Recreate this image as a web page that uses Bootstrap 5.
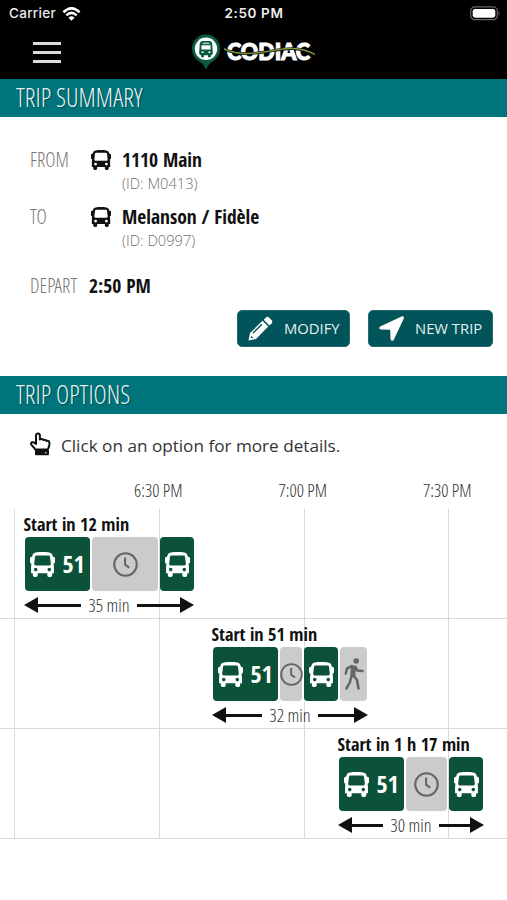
<!DOCTYPE html>
<html lang="en">
<head>
<meta charset="utf-8">
<meta name="viewport" content="width=device-width, initial-scale=1">
<title>CODIAC Trip Planner</title>
<link href="https://cdn.jsdelivr.net/npm/bootstrap@5.3.0/dist/css/bootstrap.min.css" rel="stylesheet">
<style>
body{font-family:"Open Sans","Noto Sans",sans-serif;color:#111;width:507px;height:900px;overflow:hidden;background:#fff}
svg{display:block;flex:none}
.cond{font-family:"Open Sans Condensed","Open Sans",sans-serif;font-stretch:75%;white-space:nowrap}
.light{font-family:"Open Sans Condensed Light","Open Sans Light Condensed","OpenSans-CondensedLight","Noto Sans ExtraCondensed Light","Noto Sans ExtraCondensed","Noto Sans",sans-serif;font-stretch:62.5%;font-weight:300}
.status-bar{height:27px;font:500 13.5px/27px Inter,sans-serif;color:#eee;padding:0 6px 0 9px}
.status-bar>div{flex:1 1 0}
.clock-text{font-weight:600;font-size:13.5px;letter-spacing:.6px;margin-right:2px}
.brand-bar{height:52px;padding-left:33px}
.menu-btn{width:28px;height:21px}
.menu-btn i{height:3px;background:#dcdcdc}
.section-bar{height:38px;background:#00747b;color:#e4f4f4;font-size:25.4px;line-height:37px;padding-left:16px;text-shadow:1px 1px 1px #00494e}
.summary{height:259px;padding:29px 14px 0 30px}
.stop-row{height:57px}
.lbl{width:61px;font-size:19.7px;line-height:28px;color:#777}
.val{font-size:19.5px;line-height:28px;font-weight:700}
.stop-id{font-size:14.7px;line-height:18px;color:#707070;font-weight:300}
.btn-trip{height:37px;background:#00545a;border:1px solid #23696e;border-radius:5px;color:#e3f1f1;font-size:14.8px;line-height:1;padding:0 10px;white-space:nowrap}
.btn-trip:hover{background:#00646b;color:#fff}
.hint{height:64px;padding-left:29px;font-size:17.15px;color:#333}
.ticks{height:31px;padding-left:86px;font-size:18.1px;line-height:24px;color:#333}
.ticks div{flex:0 0 144.5px;text-align:center}
.timeline{height:330px;background:linear-gradient(#d9d9d9,#d9d9d9) 14px 0/1px 100% no-repeat,linear-gradient(#d9d9d9,#d9d9d9) 159px 0/1px 100% no-repeat,linear-gradient(#d9d9d9,#d9d9d9) 304px 0/1px 100% no-repeat,linear-gradient(#d9d9d9,#d9d9d9) 448px 0/1px 100% no-repeat}
.option{height:110px;border-bottom:1px solid #d9d9d9;padding-top:3px}
.start{font-size:18.2px;line-height:25px;font-weight:700;text-indent:-.5px}
.legs{height:54px;gap:2px;padding-left:1px}
.leg{border-radius:4px;background:#0b5239;color:#fff;font-size:24px;font-weight:700}
.leg.wait{background:#cbcbcb;color:#666}
.span-row{height:27px;font-size:18.5px;line-height:27px;color:#333;gap:7px}
.arrow{flex:1 1 0;height:3px;background:#111;position:relative;top:.5px}
.arrow::after{content:"";position:absolute;top:-6.5px;border:8px solid transparent}
.arrow.lt{margin-left:10px}.arrow.rt{margin-right:10px}
.arrow.lt::after{left:-10px;border-left:0;border-right:14px solid #111}
.arrow.rt::after{right:-10px;border-right:0;border-left:14px solid #111}
</style>
<script src="https://cdn.jsdelivr.net/npm/bootstrap@5.3.0/dist/js/bootstrap.bundle.min.js"></script>
</head>
<body>
<svg width="0" height="0" class="position-absolute" aria-hidden="true">
<symbol id="bus" viewBox="0 0 24 24"><path fill="currentColor" fill-rule="evenodd" d="M12 0C17 0 20.500.4 21.300 2.500L22 4.500H22.500Q24 4.500 24 6V9.500Q24 11 22.700 11L23 15V20.300H21.300V22.300Q21.300 24 19.600 24H18.300Q16.600 24 16.600 22.300V20.300H7.400V22.300Q7.400 24 5.700 24H4.400Q2.700 24 2.700 22.300V20.300H1V15L1.300 11Q0 11 0 9.500V6Q0 4.500 1.500 4.500H2L2.700 2.500C3.500.4 7 0 12 0ZM6.200 3.300Q5 3.300 4.800 4.500L4 11.300Q3.900 13 5.500 13H18.500Q20.100 13 20 11.300L19.200 4.500Q19 3.300 17.800 3.300ZM5.500 15.200A1.700 1.700 0 1 0 5.500 18.600A1.700 1.700 0 1 0 5.500 15.200ZM18.500 15.200A1.700 1.700 0 1 0 18.500 18.600A1.700 1.700 0 1 0 18.500 15.200Z"/></symbol>
<symbol id="clock" viewBox="0 0 24 24"><circle cx="12" cy="12" r="10.800" fill="none" stroke="currentColor" stroke-width="2"/><path d="M11.600 5.200V12.200L15.600 15" fill="none" stroke="currentColor" stroke-width="2"/></symbol>
<symbol id="walk" viewBox="0 0 20 32"><circle cx="12.200" cy="3" r="2.800" fill="currentColor"/><path fill="none" stroke="currentColor" stroke-linejoin="round" d="M9.500 8L8.700 18" stroke-width="5"/><path fill="none" stroke="currentColor" stroke-width="2.600" stroke-linejoin="round" stroke-linecap="round" d="M8 8L3 10.500L1.800 15.500M11 8.500L13.500 12.500L18.500 13M7.500 18L6 24L2.500 30.500M9.500 17.500L13 22L14.500 30.500"/></symbol>
</svg>

<header class="bg-black">
  <div class="status-bar d-flex align-items-center">
    <div class="d-flex align-items-center" style="gap:6px"><span style="letter-spacing:.3px">Carrier</span>
      <svg width="19" height="14" viewBox="0 0 20 14" preserveAspectRatio="none" fill="none" stroke="#fff" stroke-width="2.600"><path d="M1.500 5.200Q10-2.500 18.500 5.200M4.600 8.400Q10 3.400 15.400 8.400"/><path d="M10 13.800L6.800 10.700Q10 7.900 13.200 10.700Z" fill="#fff" stroke="none"/></svg>
    </div>
    <span class="clock-text">2:50 PM</span>
    <div class="d-flex justify-content-end">
      <svg width="31" height="15" viewBox="0 0 31 15"><rect x=".7" y=".9" width="26.600" height="12.800" rx="4" fill="none" stroke="#666" stroke-width="1.200"/><rect x="2.700" y="2.900" width="22.600" height="8.800" rx="2.400" fill="#fff"/><path d="M28.600 5.200Q30.500 7.300 28.600 9.400Z" fill="#777"/></svg>
    </div>
  </div>
  <div class="brand-bar d-flex align-items-center">
    <button class="menu-btn btn p-0 border-0 rounded-0 d-flex flex-column justify-content-between" style="margin-top:-2px" aria-label="Menu"><i class="w-100"></i><i class="w-100"></i><i class="w-100"></i></button>
    <svg style="margin-left:130px" width="126" height="38" viewBox="0 0 126 38">
      <path d="M15 .5A14 14 0 0 0 1 14.500C1 22 6 26.500 10 28.500Q13 30.500 15 35.500Q17 30.500 20 28.500C24 26.500 29 22 29 14.500A14 14 0 0 0 15 .5Z" fill="#0b5b42"/>
      <circle cx="15" cy="14.800" r="11.200" fill="#fff"/>
      <path fill="#0b5b42" fill-rule="evenodd" d="M11.500 7.100H18.500Q21 7.300 21.300 10.300L21.800 18.300Q21.800 21.300 20 21.300H19.800V23.300H17V21.300H13V23.300H10.200V21.300H10Q8.200 21.300 8.200 18.300L8.700 10.300Q9 7.300 11.500 7.100ZM11.700 8.700V9.800H18.300V8.700ZM10.400 11.300V15.600H19.600V11.300ZM10.600 17.500V19.100H12.600V17.500ZM17.400 17.500V19.100H19.400V17.500Z"/>
      <text x="36" y="26" font-family="Lato,sans-serif" font-weight="900" font-size="22" textLength="83" lengthAdjust="spacingAndGlyphs" fill="#fff" stroke="#fff" stroke-width="1.100">CODIAC</text>
      <path d="M33 15C48 22 65 19.500 80 17S108 12 124 20.500" fill="none" stroke="#000" stroke-width="2.600"/>
      <path d="M33 15.200C48 22.200 65 19.700 80 17.200S108 12.200 124 20.700" fill="none" stroke="#1d5a32" stroke-width="1.600"/>
      <path d="M33 14.700C48 21.700 65 19.200 80 16.700S108 11.700 124 20.200" fill="none" stroke="#b09a43" stroke-width="1"/>
    </svg>
  </div>
</header>

<main>
  <h1 class="section-bar cond light m-0">TRIP SUMMARY</h1>
  <section class="summary d-flex flex-column">
    <div class="stop-row d-flex">
      <div class="lbl cond light">FROM</div>
      <svg class="mt-1" width="20" height="20"><use href="#bus"/></svg>
      <div style="margin-left:11px"><div class="val cond">1110 Main</div><div class="stop-id">(ID: M0413)</div></div>
    </div>
    <div class="stop-row d-flex">
      <div class="lbl cond light">TO</div>
      <svg class="mt-1" width="20" height="20"><use href="#bus"/></svg>
      <div style="margin-left:11px"><div class="val cond">Melanson / Fidèle</div><div class="stop-id">(ID: D0997)</div></div>
    </div>
    <div class="d-flex" style="margin-top:12px"><div class="lbl cond light" style="width:59px">DEPART</div><div class="val cond">2:50 PM</div></div>
    <div class="d-flex justify-content-end" style="gap:18px;margin-top:10px">
      <button class="btn btn-trip d-flex align-items-center" style="width:113px;gap:11px">
        <svg width="25" height="25" viewBox="0 0 25 25" fill="#fff"><path fill-rule="evenodd" d="M.5 24.500L2 17L14.500 4.800L20.300 10.600L8 23ZM5.500 17.500L14.500 8.700L13.500 7.700L4.500 16.500ZM3.200 19.800L2.700 22.300L5.200 21.800Z"/><path d="M15.700 3.700L18 1.500Q19.500.2 21 1.500L23.700 4.200Q25 5.700 23.700 7.200L21.500 9.400Z"/></svg>
        <span>MODIFY</span></button>
      <button class="btn btn-trip d-flex align-items-center" style="width:125px;gap:11px">
        <svg width="25" height="25" viewBox="0 0 25 25" fill="#fff"><path d="M1.200 10.500L22.500.4Q25.500-.3 24.800 2.500L14.800 23.800Q13.900 25.300 12.500 24.500Q11.600 24 11.500 23L11.200 13.800L2 13.500Q.6 13.300.3 12.200Q.2 11.200 1.200 10.500Z"/></svg>
        <span>NEW TRIP</span></button>
    </div>
  </section>

  <h2 class="section-bar cond light m-0">TRIP OPTIONS</h2>
  <section>
    <div class="hint d-flex align-items-center" style="gap:10px">
      <svg style="margin-bottom:4px" width="22" height="24" viewBox="0 0 22 24" fill="none" stroke="#111" stroke-width="2" stroke-linejoin="round"><path d="M6.300 17.500C5 14.500 2 14 2 11.500Q2.500 9.500 5 10.500L7 12V3.500Q7.200 1.500 9 1.500T10.900 3.500V7.500Q13 6.300 14.500 8Q16.500 7 17.600 9Q20.500 8.300 20.500 11.500Q20.500 14.500 18.800 17.500Z"/><path d="M7 19H19V22.200H7Z" fill="#111"/><circle cx="16.800" cy="20.700" r=".8" fill="#fff" stroke="none"/></svg>
      <span>Click on an option for more details.</span>
    </div>
    <div class="ticks d-flex cond light"><div>6:30 PM</div><div>7:00 PM</div><div>7:30 PM</div></div>
    <div class="timeline">
      <div class="option"><div style="margin-left:24px;width:170px">
        <div class="start cond">Start in 12 min</div>
        <div class="legs d-flex">
          <div class="leg cond d-flex align-items-center justify-content-center" style="width:65px;gap:7px"><svg width="25" height="25"><use href="#bus"/></svg>51</div>
          <div class="leg wait d-flex align-items-center justify-content-center" style="width:66px"><svg width="25" height="25"><use href="#clock"/></svg></div>
          <div class="leg d-flex align-items-center justify-content-center" style="width:34px"><svg width="25" height="25"><use href="#bus"/></svg></div>
        </div>
        <div class="span-row d-flex align-items-center cond light"><i class="arrow lt"></i>35 min<i class="arrow rt"></i></div>
      </div></div>
      <div class="option"><div style="margin-left:212px;width:156px">
        <div class="start cond">Start in 51 min</div>
        <div class="legs d-flex">
          <div class="leg cond d-flex align-items-center justify-content-center" style="width:65px;gap:7px"><svg width="25" height="25"><use href="#bus"/></svg>51</div>
          <div class="leg wait d-flex align-items-center justify-content-center" style="width:22px"><svg width="23" height="25"><use href="#clock"/></svg></div>
          <div class="leg d-flex align-items-center justify-content-center" style="width:34px"><svg width="25" height="25"><use href="#bus"/></svg></div>
          <div class="leg wait d-flex align-items-center justify-content-center" style="width:27px"><svg width="20" height="32"><use href="#walk"/></svg></div>
        </div>
        <div class="span-row d-flex align-items-center cond light"><i class="arrow lt"></i>32 min<i class="arrow rt"></i></div>
      </div></div>
      <div class="option"><div style="margin-left:338px;width:146px">
        <div class="start cond">Start in 1 h 17 min</div>
        <div class="legs d-flex">
          <div class="leg cond d-flex align-items-center justify-content-center" style="width:65px;gap:7px"><svg width="25" height="25"><use href="#bus"/></svg>51</div>
          <div class="leg wait d-flex align-items-center justify-content-center" style="width:41px"><svg width="25" height="25"><use href="#clock"/></svg></div>
          <div class="leg d-flex align-items-center justify-content-center" style="width:34px"><svg width="25" height="25"><use href="#bus"/></svg></div>
        </div>
        <div class="span-row d-flex align-items-center cond light"><i class="arrow lt"></i>30 min<i class="arrow rt"></i></div>
      </div></div>
    </div>
  </section>
</main>
</body>
</html>
